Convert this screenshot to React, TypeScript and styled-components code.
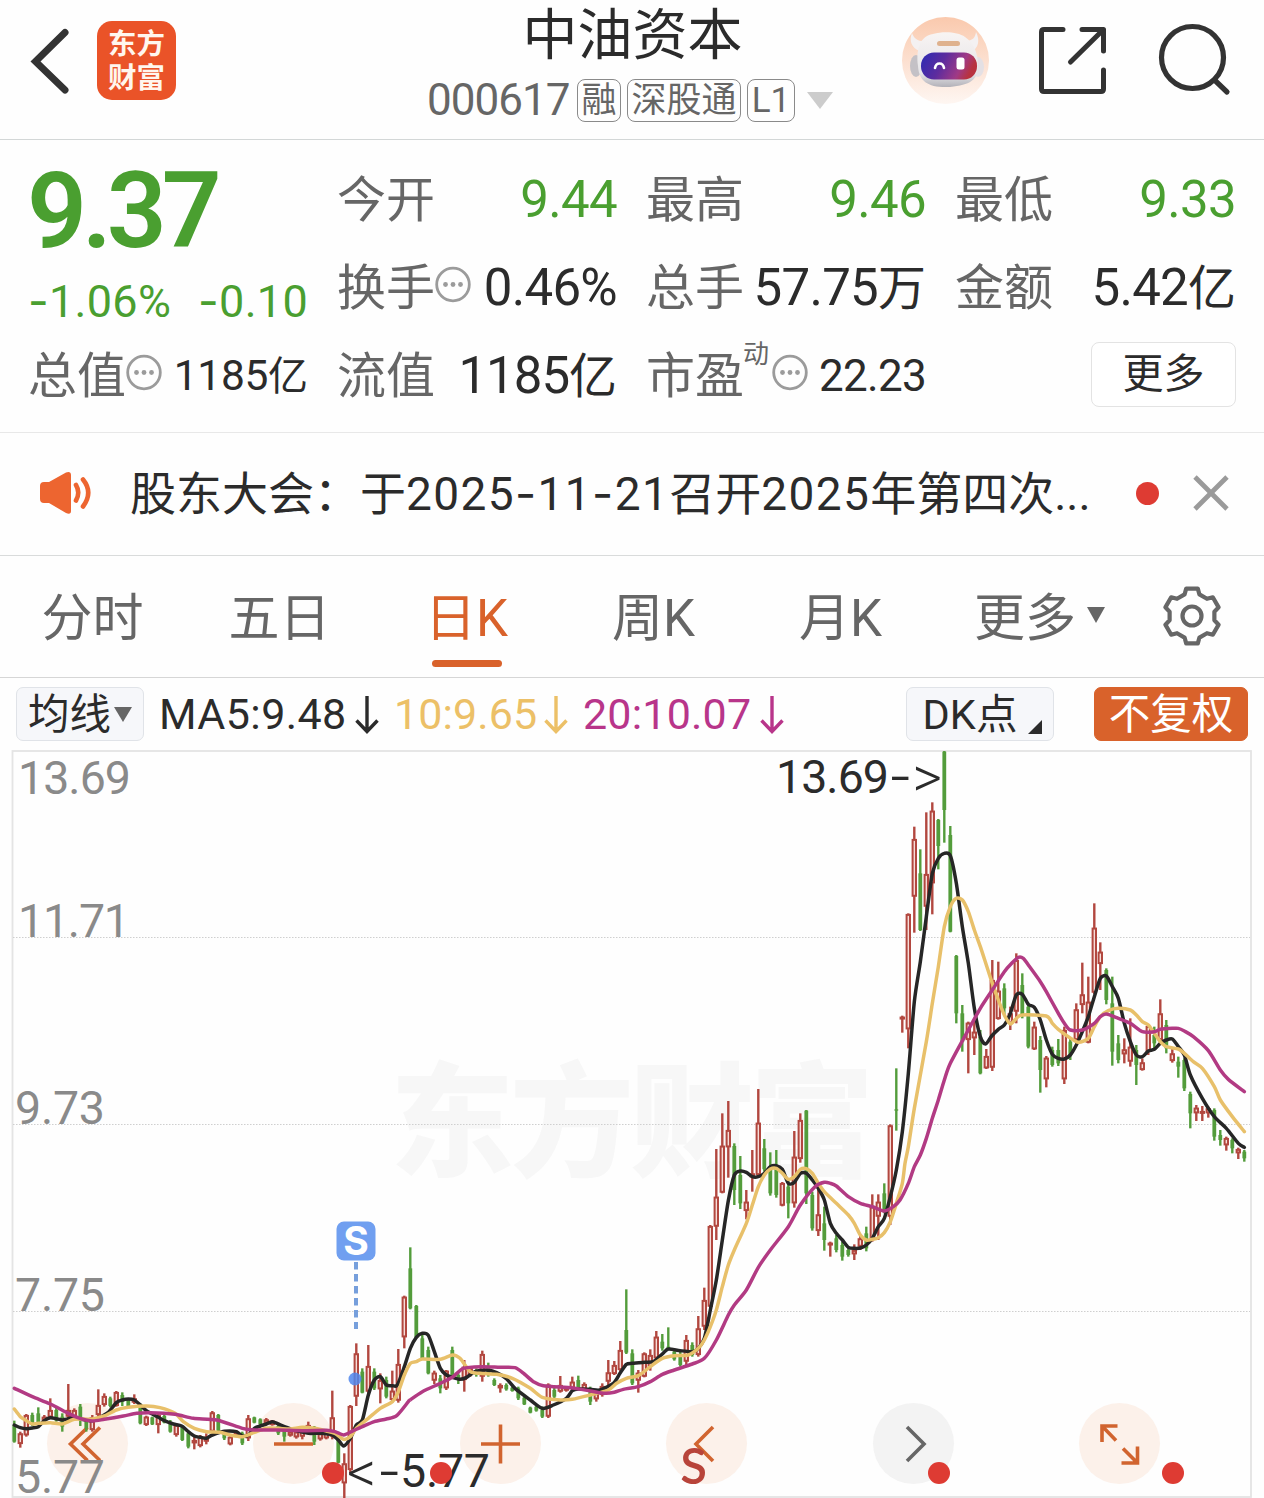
import React from "react";
import styled, { createGlobalStyle } from "styled-components";

const GREEN = "#4a9f30";
const ORANGE = "#d9622b";
const INK = "#2b2b2b";
const GREY = "#666666";
const FONT = `Roboto, "Noto Sans CJK SC", sans-serif`;

const GlobalStyle = createGlobalStyle`
  * { box-sizing: border-box; }
  body { margin: 0; background: #fff; font-family: ${FONT}; color: ${INK}; }
  svg { display: block; flex: none; }
`;

const Screen = styled.div`
  width: 1264px;
  height: 1498px;
  overflow: hidden;
  display: flex;
  flex-direction: column;
  background: #fefefe;
`;

/* ---------- header ---------- */
const Header = styled.header`
  height: 140px;
  flex: none;
  display: grid;
  grid-template-columns: 427px 411px 1fr;
  border-bottom: 1px solid #d3d7d7;
`;
const HeaderLeft = styled.div`
  display: flex;
  gap: 27px;
  padding: 21px 0 0 30px;
`;
const Logo = styled.div`
  width: 79px;
  height: 79px;
  border-radius: 15px;
  background: #ea5328;
  color: #fff6ee;
  font: 700 28.5px/34px "Noto Sans CJK SC", sans-serif;
  text-align: center;
  padding-top: 4px;
`;
const HeaderCenter = styled.div`
  display: flex;
  flex-direction: column;
`;
const Title = styled.h1`
  margin: 0;
  height: 79px;
  line-height: 70px;
  font-size: 55px;
  font-weight: 400;
  text-align: center;
`;
const SubTitle = styled.div`
  display: flex;
  align-items: center;
  height: 43px;
  color: ${GREY};
`;
const Code = styled.span`
  width: 150px;
  font-size: 44px;
  letter-spacing: -1px;
  line-height: 43px;
`;
const Tag = styled.span<{ $w: number }>`
  width: ${(p) => p.$w}px;
  height: 43px;
  margin-right: 6px;
  border: 1.5px solid #8a8a8a;
  border-radius: 8px;
  font-size: 35px;
  line-height: 41px;
  text-align: center;
  white-space: nowrap;
`;
const SubArrow = styled.span`
  margin-left: 6px;
  border: 13px solid transparent;
  border-top: 17px solid #ccc;
  border-bottom: 0;
`;
const HeaderRight = styled.div`
  display: flex;
  padding: 17px 0 0 64px;
`;
const IconSlot = styled.div<{ $left: number; $top: number }>`
  padding: ${(p) => p.$top}px 0 0 ${(p) => p.$left}px;
`;

/* ---------- quote ---------- */
const Quote = styled.section`
  height: 293px;
  flex: none;
  display: grid;
  grid-template-columns: 278px 278px 278px 279px;
  grid-template-rows: 88px 88px 84px;
  column-gap: 31px;
  padding: 16px 28px 0 30px;
  border-bottom: 1px solid #e8e8e8;
`;
const PriceBlock = styled.div`
  grid-row: 1 / span 2;
  color: ${GREEN};
`;
const Price = styled.div`
  font-size: 105px;
  font-weight: 600;
  line-height: 112px;
  height: 122px;
  letter-spacing: -5px;
  margin-left: -3px;
`;
const Change = styled.div`
  display: flex;
  justify-content: space-between;
  font-size: 45px;
  line-height: 46px;
  letter-spacing: 0.3px;
  margin-left: -2px;
`;
const Cell = styled.div`
  display: flex;
  align-items: center;
  height: 88px;
`;
const Label = styled.span`
  font-size: 49px;
  line-height: 91px;
  margin: 0 -1px 0 -2px;
  color: ${GREY};
  white-space: nowrap;
`;
const Sup = styled.span`
  align-self: flex-start;
  width: 28px;
  padding-top: 1px;
  font-size: 26px;
  color: ${GREY};
`;
const Value = styled.span<{ $size?: number; $green?: boolean; $ls?: number }>`
  margin-left: auto;
  font-size: ${(p) => p.$size ?? 51}px;
  letter-spacing: ${(p) => p.$ls ?? -0.7}px;
  color: ${(p) => (p.$green ? GREEN : INK)};
  line-height: 88px;
  white-space: nowrap;
`;
const Unit = styled.span`
  font-size: 0.94em;
  letter-spacing: 0;
`;
const MoreButton = styled.button`
  width: 145px;
  height: 65px;
  margin: -4px 0 0 auto;
  border: 1.5px solid #e3e3e3;
  border-radius: 8px;
  background: #fff;
  color: ${INK};
  font: 400 41px/57px ${FONT};
  padding: 0;
`;
const Info = styled.svg`
  margin-top: -7px;
`;
const Dash = styled.span`
  font-family: Inter, sans-serif;
`;

/* ---------- notice ---------- */
const Notice = styled.section`
  height: 123px;
  flex: none;
  display: flex;
  align-items: center;
  padding: 0 35px 2px 38px;
  border-bottom: 1px solid #d9dbdb;
`;
const NoticeText = styled.div`
  width: 1005px;
  margin-left: 37px;
  margin-right: 1px;
  font-size: 46px;
  line-height: 60px;
  white-space: nowrap;
`;
const Num = styled.span`
  letter-spacing: 1.4px;
`;
const RedDot = styled.i`
  width: 23px;
  height: 23px;
  border-radius: 50%;
  background: #de3b33;
  margin-right: 34px;
`;

/* ---------- tabs ---------- */
const Tabs = styled.nav`
  height: 122px;
  flex: none;
  display: flex;
  border-bottom: 1px solid #d6d6d6;
`;
const Tab = styled.div<{ $w: number; $active?: boolean }>`
  width: ${(p) => p.$w}px;
  display: flex;
  flex-direction: column;
  align-items: center;
  font-size: 51px;
  line-height: 104px;
  padding: 11px 2px 0 0;
  color: ${(p) => (p.$active ? ORANGE : GREY)};
  white-space: nowrap;
`;
const TabLine = styled.i`
  width: 70px;
  height: 7px;
  margin-top: -11px;
  border-radius: 4px;
  background: ${ORANGE};
`;
const TabRow = styled.div`
  display: flex;
  align-items: center;
  gap: 11px;
`;
const GearCell = styled.div`
  width: 92px;
  padding: 29px 0 0 15px;
`;
const Caret = styled.i<{ $y: number; $up?: number }>`
  margin-top: ${(p) => -(p.$up ?? 0)}px;
  border: 9px solid transparent;
  border-top: ${(p) => p.$y}px solid ${GREY};
  border-bottom: 0;
`;

/* ---------- indicator bar ---------- */
const Indicators = styled.div`
  height: 72px;
  flex: none;
  display: flex;
  align-items: flex-start;
  padding: 9px 16px 0;
`;
const Chip = styled.div<{ $w: number; $ml?: string; $primary?: boolean }>`
  width: ${(p) => p.$w}px;
  height: 54px;
  margin-left: ${(p) => p.$ml ?? "0"};
  display: flex;
  align-items: center;
  justify-content: center;
  gap: 3px;
  border: 1.5px solid ${(p) => (p.$primary ? ORANGE : "#e0e3e8")};
  border-radius: 7px;
  background: ${(p) => (p.$primary ? ORANGE : "#f6f7fa")};
  color: ${(p) => (p.$primary ? "#fff" : INK)};
  font-size: 41.5px;
  line-height: 53px;
  white-space: nowrap;
`;
const Corner = styled.i`
  align-self: flex-end;
  margin: 0 -5px 6px 8px;
  border-left: 14px solid transparent;
  border-bottom: 14px solid ${INK};
`;
const MaGroup = styled.div`
  display: flex;
  gap: 15px;
  margin-left: 15px;
`;
const Ma = styled.div<{ $w: number; $color: string; $ls: number }>`
  width: ${(p) => p.$w}px;
  height: 54px;
  display: flex;
  align-items: center;
  justify-content: space-between;
  color: ${(p) => p.$color};
  font-size: 43px;
  letter-spacing: ${(p) => p.$ls}px;
  white-space: nowrap;
`;

/* ---------- chart ---------- */
const ChartPanel = styled.section`
  position: relative;
  width: 1264px;
  height: 748px;
  flex: none;
`;
const Canvas = styled.svg`
  position: relative;
  z-index: 1;
`;
const Controls = styled.div`
  position: absolute;
  left: 47px;
  right: 104px;
  top: 653px;
  display: flex;
  justify-content: space-between;
`;
const Round = styled.div<{ $muted?: boolean }>`
  width: 81px;
  height: 81px;
  border-radius: 50%;
  background: ${(p) => (p.$muted ? "#f3f3f3" : "#fcf1ea")};
`;

type Candle = [number, number, number, number, number];
const R = 1;
const G = 0;
/* Each block lists [direction, high, bodyTop, bodyBottom, low] in thirds of a pixel below its base. */
const blocks: { base: number; rows: Candle[] }[] = [
  { base: 1180, rows: [
    [G,722,735,785,788],[R,755,760,792,803],[R,702,705,766,770],[G,698,705,735,738],[G,682,700,730,735],
    [R,705,710,722,725],[R,655,690,712,715],[G,680,690,722,725],[G,700,710,740,755],[R,612,690,710,715],
    [R,685,690,712,714],[G,672,680,715,738],[G,715,720,745,755],[R,705,712,750,755],[R,628,675,705,710],
    [R,640,648,675,680],[G,650,655,678,682],[R,633,636,678,680],[G,637,645,665,678],[G,655,660,680,682],
    [R,643,655,668,672],[G,670,680,730,733],[R,707,710,735,738],[G,710,712,733,735],[R,700,705,735,760],
    [G,705,708,728,730],[G,720,725,755,758],[R,730,735,765,770],[G,735,740,780,783],[G,755,760,800,805],
    [R,770,780,790,808],[R,765,770,798,802],[R,760,770,785,793],[R,693,697,755,760],[G,702,705,752,755],
    [G,750,755,775,780],[R,765,770,793,796],[R,750,755,765,770],[G,755,760,790,795],[R,705,715,775,783],
    [G,710,712,728,730],[G,715,718,733,735],[R,714,718,730,733],[R,720,722,735,737],[G,735,738,760,765],
    [G,745,750,770,785],[R,750,755,767,770],[R,748,755,772,776],[R,750,752,770,778],[R,725,735,755,760],
    [G,738,745,785,795],[R,750,760,778,782],[R,755,758,775,778],[R,632,712,770,778],[G,755,765,848,850],
    [R,820,850,910,955],[R,675,678,870,880],[R,490,520,650,678],[G,565,575,638,640],[R,495,558,635,640],
    [G,565,575,625,630],[R,580,600,628,670],[G,590,600,650,655],[R,572,632,660,668],[R,507,552,662,668],
    [R,347,350,472,505],[G,202,265,385,388],[G,375,378,473,475],[G,465,475,535,540],[G,500,510,580,583],
    [R,572,578,602,612],[G,585,595,625,640],[R,570,572,625,630],[G,500,510,590,595],[G,580,585,600,612],
    [R,540,560,600,635],[R,560,565,585,590],[G,565,570,585,590],[R,512,522,590,605],[G,548,560,585,590],
    [G,595,600,615,618],[R,610,615,625,638],[G,610,615,628,632],[G,620,623,633,635],[G,620,625,655,660],
    [G,648,653,673,675],[G,680,683,698,700],[G,678,680,692,695],[G,680,690,710,714],[R,610,614,710,714],
    [G,622,630,650,655],[R,588,615,635,638],[R,618,622,632,635],[R,590,605,625,630],[G,587,600,625,630],
    [R,607,612,628,630],[G,620,630,665,675],[R,635,640,658,665],[R,610,618,645,650],[R,540,577,605,615],
    [R,543,555,582,585],[R,483,510,570,575],[G,328,450,518,522],[G,508,520,610,615],[R,570,578,602,638],
    [R,517,520,590,592],[R,508,525,560,572],[R,453,470,535,540],[G,462,485,505,512],[G,442,500,508,510],
    [G,510,515,538,542],[G,515,530,555,560],[R,465,480,545,555],[G,487,495,525,530],[R,408,445,525,530],
    [R,323,360,440,450],[R,135,138,380,385],
  ] },
  { base: 1060, rows: [
    [R,267,410,500,540],[R,160,257,398,400],[R,123,210,262,353],[G,250,258,390,435],[G,288,345,430,447],
    [R,390,425,453,478],[R,270,340,352,395],[R,87,188,345,352],[G,237,265,328,335],[G,277,320,400,407],
    [G,270,320,405,413],[R,366,369,437,439],[G,360,380,430,475],[R,213,290,430,443],[R,160,180,297,308],
    [G,150,152,400,432],[G,395,405,505,512],[R,385,463,513,528],[G,440,490,540,572],[R,545,548,552,590],
    [G,525,535,570,577],[G,545,555,590,602],[G,565,570,585,590],[R,553,570,583,600],[R,527,535,560,570],
    [G,500,520,565,574],[R,403,440,540,545],[R,403,425,470,540],[G,370,400,450,460],[R,193,196,470,495],
  ] },
  { base: 740, rows: [
    [G,985,1108,1112,1172],[R,827,830,838,878],[R,520,522,868,925],[R,260,297,470,578],[G,328,400,570,573],
    [R,217,402,500,570],[R,187,212,430,523],[G,237,240,318,388],[G,33,35,210,308],[G,258,285,575,577],
    [G,645,648,820,850],[G,795,820,905,935],[R,845,848,900,1000],[R,840,875,895,945],[G,870,890,1000,1003],
    [R,927,948,985,987],[R,660,720,983,993],[R,665,752,837,839],[G,730,745,805,825],[R,800,820,850,870],
    [R,640,660,815,850],[G,700,735,825,835],[G,790,800,920,925],[R,845,860,928,930],[G,888,900,990,1058],
    [R,948,953,1018,1042],[G,920,930,975,980],[G,897,930,970,978],[R,860,870,1018,1032],[G,895,905,945,960],
    [R,790,808,900,905],[R,668,763,795,820],[R,710,785,908,910],[R,490,563,758,762],[R,607,635,672,750],
    [G,685,690,780,793],[G,710,790,935,977],[G,885,910,960,970],[R,895,928,943,970],[R,835,920,965,980],
    [G,915,930,975,1035],[R,955,967,990,992],[R,853,858,935,945],[G,860,885,910,925],[R,778,820,900,905],
    [G,840,855,925,940],[R,925,940,963,968],[G,950,965,980,1013],[G,955,960,1045,1053],[G,1055,1062,1120,1165],
    [R,1095,1103,1120,1143],[R,1098,1113,1120,1143],[R,1100,1105,1120,1133],[G,1105,1110,1190,1202],
    [G,1170,1185,1200,1217],[R,1190,1194,1216,1232],[G,1195,1200,1225,1240],[R,1223,1227,1240,1257],
    [G,1230,1235,1255,1265],
  ] },
];

const candles = blocks.flatMap((b) =>
  b.rows.map(([up, ...ys]) => ({ up, ys: ys.map((y) => b.base + y / 3) }))
);

/* Moving averages: segments of x,y pairs in thirds of a pixel from an origin. */
type Segment = [number, number, number[]];
const toPath = (segments: Segment[]) => {
  const pts: [number, number][] = [];
  segments.forEach(([ox, oy, v]) => {
    for (let i = 0; i < v.length; i += 2) pts.push([ox + v[i] / 3, oy + v[i + 1] / 3]);
  });
  let d = `M${pts[0][0]} ${pts[0][1]}`;
  for (let i = 0; i < pts.length - 1; i++) {
    const p0 = pts[Math.max(0, i - 1)];
    const p1 = pts[i];
    const p2 = pts[i + 1];
    const p3 = pts[Math.min(pts.length - 1, i + 2)];
    const k = 8;
    d += `C${p1[0] + (p2[0] - p0[0]) / k} ${p1[1] + (p2[1] - p0[1]) / k} ${p2[0] - (p3[0] - p1[0]) / k} ${p2[1] - (p3[1] - p1[1]) / k} ${p2[0]} ${p2[1]}`;
  }
  return d;
};

const ma5: Segment[] = [
  [0, 1180, [43,735,61,743,79,746,97,744,115,740,133,722,151,713,169,716,187,720,205,716,223,712,241,717,259,720,277,722,300,712,325,697,349,668,367,660,385,657,403,660,421,675,439,692,457,702,475,712,493,722,520,732,545,738,565,755,583,768,601,772,619,775,637,765,673,754,709,755,727,768,745,765,763,745,781,738,799,732,817,725,835,732,860,742,889,752,925,760,960,760,997,765,1015,780,1031,798,1051,775,1069,735,1087,720,1105,645,1123,600,1141,590,1159,615,1177,617,1192,615,1213,560,1231,505,1249,472]],
  [400, 1180, [67,460,85,466,103,515,121,565,139,585,157,592,180,598,200,592,225,575,260,570,290,578,320,597,345,625,391,660,427,685,460,675,499,655,517,632,535,627,571,628,600,630,640,610,660,580,679,553,697,550,733,547,760,545,787,522,805,507,840,512,877,515,895,505,913,475,931,390,949,300,967,180,985,62]],
  [680, 1060, [163,345,181,333,199,337,217,350,235,350,253,340,271,320,289,317,307,328,325,370,343,367,361,340,379,340,397,360,415,385,433,420,451,490,469,520,487,540,505,562,523,565,541,564,559,555,577,535,595,500,613,475,631,410,649,330,667,215]],
  [860, 740, [145,1000,163,785,181,665,199,530,217,400,235,355,253,340,271,347,289,430,307,560,325,670,343,805,361,890,377,912,395,888,415,868,433,855,451,820,469,765,487,763,505,793,523,802,541,840,559,900,577,943,595,955,613,957,631,945,649,915,667,875,685,830,703,770,721,715,739,708,757,740,775,775,793,850,811,905,829,945,847,950,865,933,883,928,901,910,919,900,937,897,955,920,973,945,991,1005,1027,1075,1063,1130,1099,1165,1135,1210,1153,1222]],
];
const ma10: Segment[] = [
  [0, 1180, [43,687,61,710,79,722,97,732,115,730,151,728,187,732,223,718,277,717,313,708,349,690,385,682,440,678,480,683,525,700,550,725,583,745,620,755,660,757,690,765,727,770,763,757,799,745,835,745,870,747,907,742,943,745,979,753,1005,760,1031,778,1051,770,1069,745,1105,715,1141,685,1177,665,1195,635,1213,585,1231,550,1249,545]],
  [400, 1180, [67,537,121,538,157,525,180,535,211,575,240,580,290,583,337,595,391,625,427,652,481,660,517,658,571,645,625,630,650,610,679,595,715,587,751,560,787,535,823,527,865,525,895,505,913,480,931,440,949,390,967,320,985,255,1003,210,1039,130,1057,75,1075,20]],
  [680, 1060, [253,345,271,327,289,325,307,340,325,358,343,350,361,328,379,326,397,340,415,370,433,395,469,430,505,465,523,490,541,525,559,540,577,538,595,533,613,518,631,485,649,430,667,370,675,310]],
  [860, 740, [145,1220,163,1105,199,905,217,790,235,680,253,560,271,500,289,475,307,480,325,515,343,570,361,620,379,675,397,730,415,780,433,825,451,852,469,835,487,825,559,828,577,850,595,868,625,890,655,907,685,895,703,860,721,830,745,812,775,805,811,810,829,825,847,845,865,855,883,880,901,905,919,920,955,927,973,940,1000,965,1027,985,1063,1040,1081,1080,1117,1130,1153,1175]],
];
const ma20: Segment[] = [
  [0, 1180, [43,625,97,650,151,672,205,700,240,715,277,723,313,718,370,708,410,700,450,698,525,703,580,715,650,720,727,745,763,750,835,750,907,752,979,751,1005,755,1031,765,1060,752,1087,740,1123,725,1159,717,1190,707,1225,665]],
  [400, 1180, [30,660,67,635,121,610,157,592,190,565,245,560,300,562,345,563,373,582,400,605,430,617,517,624,571,633,615,640,643,637,670,628,715,620,751,605,787,583,823,570,877,552,913,535,949,480,985,405,1003,375,1039,330,1075,262,1111,210,1165,140,1201,75]],
  [680, 1060, [405,380,433,367,451,370,469,378,505,410,541,430,577,440,613,453,640,440,660,420,685,370,703,320,721,285,739,235,757,175,775,120]],
  [860, 740, [253,1020,271,970,325,870,361,805,397,750,433,695,455,670,475,652,490,655,505,675,541,725,559,755,595,820,613,850,631,870,667,870,703,850,721,830,739,822,775,835,811,850,847,875,883,875,901,868,937,865,955,865,973,873,1000,890,1045,932,1081,990,1105,1018,1153,1055]],
];

const axis: [string, number, number, number][] = [
  ["13.69", 18, 794, 113],
  ["11.71", 18, 937, 112],
  ["9.73", 15, 1124, 90],
  ["7.75", 15, 1310.5, 90],
  ["5.77", 15, 1493, 90],
];

const InfoIcon = () => (
  <Info width="37" height="37" viewBox="0 0 37 37">
    <circle cx="19" cy="18.5" r="16.3" fill="none" stroke="#9b9b9b" strokeWidth="2.8" />
    {[11.5, 19, 26.5].map((x) => <circle key={x} cx={x} cy="18.5" r="2.4" fill="#9b9b9b" />)}
  </Info>
);

const DownArrow = () => (
  <svg width="24" height="54" viewBox="0 0 24 54" fill="none" stroke="currentColor" strokeWidth="3.4">
    <path d="M12 9V44M1.5 33.5L12 44.5L22.5 33.5" />
  </svg>
);

const Robot = () => (
  <svg width="87" height="87" viewBox="0 0 87 87">
    <defs>
      <linearGradient id="sky" x1="0" y1="0" x2="0" y2="1">
        <stop offset="0" stopColor="#fac9ad" /><stop offset=".75" stopColor="#fdebe1" /><stop offset="1" stopColor="#fef6f2" />
      </linearGradient>
      <linearGradient id="visor" x1="0" y1="0" x2="1" y2=".25">
        <stop offset="0" stopColor="#2b2bb4" /><stop offset=".45" stopColor="#5d2c9e" /><stop offset=".8" stopColor="#a03a86" /><stop offset="1" stopColor="#b8323f" />
      </linearGradient>
      <linearGradient id="shell" x1="0" y1="0" x2="0" y2="1">
        <stop offset="0" stopColor="#f8f4f3" /><stop offset=".75" stopColor="#e6e5e8" /><stop offset="1" stopColor="#b2b1b8" />
      </linearGradient>
    </defs>
    <circle cx="43.5" cy="43.5" r="43.5" fill="url(#sky)" />
    <path d="M10 16C7 23 9 31 18 34L24 24C17 25 12 22 10 16ZM74 15C78 23 77 31 69 35L61 23C69 25 73 22 74 15Z" fill="#f4f1f2" />
    <ellipse cx="14" cy="49" rx="6" ry="11" fill="#c4c1c6" />
    <ellipse cx="76" cy="50" rx="6" ry="10" fill="#e4e0e4" />
    <path d="M16 49C14 32 18 19 31 17C42 14 56 15 63 20C72 26 76 36 76 49C76 63 68 68 48 70C27 71 17 65 16 49Z" fill="url(#shell)" />
    <rect x="35" y="24" width="23" height="5" rx="2.5" fill="#dfb28e" />
    <rect x="19" y="35.5" width="56" height="27" rx="13" fill="url(#visor)" />
    <path d="M33 51C34 45 41 45 42 51" fill="none" stroke="#fff" strokeWidth="2.6" strokeLinecap="round" />
    <rect x="54.5" y="40.5" width="8" height="12" rx="2.5" fill="#fff" />
  </svg>
);

const Gear = () => {
  const pts: string[] = [];
  for (let i = 0; i < 6; i++) {
    const at = (deg: number, r: number) => {
      const a = ((i * 60 + deg - 90) * Math.PI) / 180;
      return `${31 + r * Math.cos(a)} ${31 + r * Math.sin(a)}`;
    };
    pts.push(at(-12, 28), at(12, 28), at(19, 22.8), at(41, 22.8));
  }
  return (
    <svg width="62" height="62" viewBox="0 0 62 62" fill="none" stroke={GREY} strokeWidth="4.2">
      <path d={`M${pts.join("L")}Z`} strokeLinejoin="round" />
      <circle cx="31" cy="31" r="9.5" />
    </svg>
  );
};

const controlIcons = [
  "M53 24.5L36 41L53 57.5M40.5 24.5L23.5 41L40.5 57.5",
  "M21 41H60",
  "M21 41H60M40.5 21.5V60.5",
  "M47 24L30 41L47 58",
  "M34 24L51 41L34 58",
  "M23 39V23H38.5M23.5 23.5L37 37.5M42.5 60H58.5V43.5M58 59.5L44 45.5",
];

export default function App() {
  return (
    <>
      <GlobalStyle />
      <Screen>
        <Header>
          <HeaderLeft>
            <svg width="40" height="80" viewBox="30 21 40 80">
              <path d="M65 32.5L35.5 61.5L65 90" fill="none" stroke="#333" strokeWidth="7" strokeLinecap="round" />
            </svg>
            <Logo>东方<br />财富</Logo>
          </HeaderLeft>
          <HeaderCenter>
            <Title>中油资本</Title>
            <SubTitle>
              <Code>000617</Code>
              <Tag $w={44}>融</Tag>
              <Tag $w={114}>深股通</Tag>
              <Tag $w={48}>L1</Tag>
              <SubArrow />
            </SubTitle>
          </HeaderCenter>
          <HeaderRight>
            <Robot />
            <IconSlot $left={48} $top={8}>
              <svg width="72" height="72" viewBox="1037 25 72 72" fill="none" stroke="#333" strokeWidth="5" strokeLinecap="round" strokeLinejoin="round">
                <path d="M1063 29.500H1044Q1041.500 29.500 1041.500 32V89Q1041.500 91.500 1044 91.500H1101Q1103.500 91.500 1103.500 89V70M1082 29.500H1103.500V51M1103 30L1070.500 62" />
              </svg>
            </IconSlot>
            <IconSlot $left={48} $top={5}>
              <svg width="76" height="76" viewBox="1157 22 76 76" fill="none" stroke="#333" strokeWidth="5.2" strokeLinecap="round">
                <circle cx="1192.5" cy="57.5" r="31" />
                <path d="M1214.500 80L1227 92" />
              </svg>
            </IconSlot>
          </HeaderRight>
        </Header>

        <Quote>
          <PriceBlock>
            <Price>9.37</Price>
            <Change>
              <span><Dash>-</Dash>1.06%</span>
              <span><Dash>-</Dash>0.10</span>
            </Change>
          </PriceBlock>
          <Cell><Label>今开</Label><Value $green>9.44</Value></Cell>
          <Cell><Label>最高</Label><Value $green>9.46</Value></Cell>
          <Cell><Label>最低</Label><Value $green>9.33</Value></Cell>
          <Cell><Label>换手</Label><InfoIcon /><Value>0.46%</Value></Cell>
          <Cell><Label>总手</Label><Value>57.75<Unit>万</Unit></Value></Cell>
          <Cell><Label>金额</Label><Value>5.42<Unit>亿</Unit></Value></Cell>
          <Cell><Label>总值</Label><InfoIcon /><Value $size={42.5} $ls={-0.3}>1185<Unit>亿</Unit></Value></Cell>
          <Cell><Label>流值</Label><Value $ls={-1}>1185<Unit>亿</Unit></Value></Cell>
          <Cell><Label>市盈</Label><Sup>动</Sup><InfoIcon /><Value $size={44}>22.23</Value></Cell>
          <Cell><MoreButton>更多</MoreButton></Cell>
        </Quote>

        <Notice>
          <svg width="55" height="46" viewBox="38 470 55 46">
            <path d="M40 486Q40 482 44 482H49L66 472.500Q71 471 71 475V511Q71 515 66 513L49 503H44Q40 503 40 499Z" fill="#ed6530" />
            <path d="M76 485Q80.500 492.500 76 500.500M83 479.500Q93.500 492.500 83 506.500" fill="none" stroke="#ed6530" strokeWidth="4.600" strokeLinecap="round" />
          </svg>
          <NoticeText>
            股东大会：于<Num>2025<Dash>-</Dash>11<Dash>-</Dash>21</Num>召开<Num>2025</Num>年第四次...
          </NoticeText>
          <RedDot />
          <svg width="36" height="36" viewBox="0 0 36 36" stroke="#9a9a9a" strokeWidth="4.8">
            <path d="M2 2L34 34M34 2L2 34" />
          </svg>
        </Notice>

        <Tabs>
          <Tab $w={187}>分时</Tab>
          <Tab $w={187}>五日</Tab>
          <Tab $w={187} $active>日K<TabLine /></Tab>
          <Tab $w={187}>周K</Tab>
          <Tab $w={187}>月K</Tab>
          <Tab $w={211}><TabRow>更多<Caret $y={16} $up={8} /></TabRow></Tab>
          <GearCell><Gear /></GearCell>
        </Tabs>

        <Indicators>
          <Chip $w={128}>均线<Caret $y={15} /></Chip>
          <MaGroup>
            <Ma $w={220} $color={INK} $ls={0.4}>MA5:9.48<DownArrow /></Ma>
            <Ma $w={174} $color="#ecc067" $ls={0.1}>10:9.65<DownArrow /></Ma>
            <Ma $w={201} $color="#b8358a" $ls={0.2}>20:10.07<DownArrow /></Ma>
          </MaGroup>
          <Chip $w={148} $ml="auto">DK点<Corner /></Chip>
          <Chip $w={154} $ml="40px" $primary>不复权</Chip>
        </Indicators>

        <ChartPanel>
          <Controls>
            {controlIcons.map((d, i) => (
              <Round key={d} $muted={i === 4}>
                <svg width="81" height="81" viewBox="0 0 81 81" fill="none" stroke={i === 4 ? "#666" : "#d1642f"} strokeWidth="3.6">
                  <path d={d} />
                </svg>
              </Round>
            ))}
          </Controls>
          <Canvas width="1264" height="748" viewBox="0 750 1264 748" fontFamily={FONT}>
            <text x="390" y="1167" fontSize="124" fontWeight="900" fill="#f7f7f7" textLength="484">东方财富</text>
            <rect x="12.5" y="751" width="1238.5" height="746" fill="none" stroke="#e4e4e4" strokeWidth="1.8" />
            {[937.5, 1124.5, 1311.5].map((y) => (
              <path key={y} d={`M13 ${y}H1250`} stroke="#cfcfcf" strokeDasharray="1.5 1.5" />
            ))}
            {candles.map(({ up, ys: [hi, top, bottom, lo] }, i) => {
              const x = 14.3 + i * 6;
              const color = up ? "#b2473f" : "#539c3b";
              return (
                <g key={i} stroke={color}>
                  <path d={`M${x} ${hi}V${lo}`} strokeWidth="2.4" />
                  {up ? (
                    <rect x={x - 1.7} y={top + 0.9} width="3.4" height={Math.max(1, bottom - top - 1.8)} fill="#f6dcd8" strokeWidth="2" />
                  ) : (
                    <path d={`M${x} ${top}V${bottom}`} strokeWidth="3.8" />
                  )}
                </g>
              );
            })}
            <g fill="none" strokeWidth="3.5" strokeLinejoin="round" strokeLinecap="round">
              <path d={toPath(ma5)} stroke="#262626" />
              <path d={toPath(ma10)} stroke="#e8c06a" />
              <path d={toPath(ma20)} stroke="#b23a83" />
            </g>
            <circle cx="355" cy="1379" r="6.5" fill="#4f86ec" fillOpacity=".85" />
            <path d="M356 1262V1329" stroke="#769fdc" strokeWidth="4" strokeDasharray="7.5 4.5" />
            <rect x="336.5" y="1221.5" width="39" height="39" rx="7.5" fill="#709ff0" />
            <text x="356" y="1255" fontSize="39" fontWeight="700" fill="#fff" textAnchor="middle" fontFamily="Inter, sans-serif">S</text>
            <g fontSize="46.5" fill="#8a8a8a">
              {axis.map(([label, x, y, len]) => (
                <text key={label} x={x} y={y} textLength={len}>{label}</text>
              ))}
            </g>
            <g fontSize="46.5" fill={INK}>
              <text x="776" y="792.5" textLength="113">13.69</text>
              <text x="888" y="795" fontSize="54" fontFamily="Inter, sans-serif" fontWeight="300">-</text>
              <text x="912.5" y="796.5" fontSize="57" fontWeight="300">&gt;</text>
              <text x="347" y="1491.5" fontSize="57" fontWeight="300">&lt;</text>
              <text x="377" y="1490" fontSize="54" fontFamily="Inter, sans-serif" fontWeight="300">-</text>
              <text x="400" y="1487" textLength="90">5.77</text>
            </g>
            <text x="693.5" y="1483.5" fontSize="49" fontWeight="600" fill="#b8443a" textAnchor="middle" fontFamily="Lato, sans-serif">S</text>
            {[333, 441, 939, 1173].map((x) => <circle key={x} cx={x} cy="1473" r="11" fill="#de3b33" />)}
          </Canvas>
        </ChartPanel>
      </Screen>
    </>
  );
}
